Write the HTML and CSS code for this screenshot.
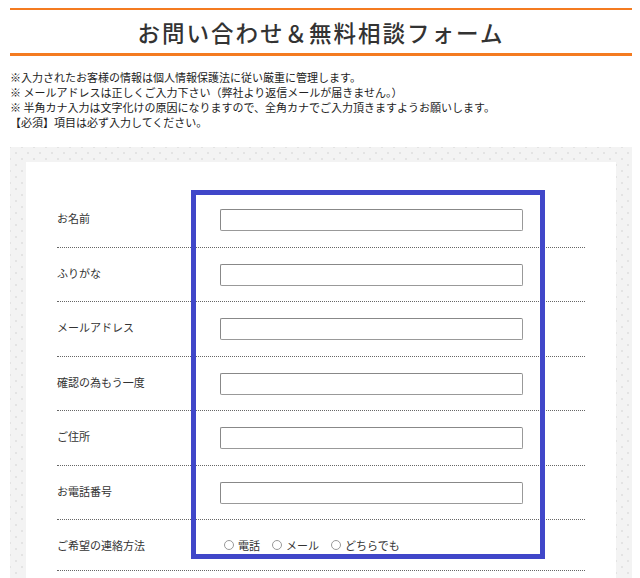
FILE: index.html
```html
<!DOCTYPE html>
<html lang="ja">
<head>
  <meta charset="UTF-8">
  <meta name="viewport" content="width=device-width, initial-scale=1">
  <title>お問い合わせ＆無料相談フォーム</title>
  <link rel="stylesheet" href="styles.css">
</head>
<body>
<div class="page">
  <h1 class="form-title">お問い合わせ＆無料相談フォーム</h1>
  <div class="notes">
    <p>※入力されたお客様の情報は個人情報保護法に従い厳重に管理します。</p>
    <p>※ メールアドレスは正しくご入力下さい（弊社より返信メールが届きません。）</p>
    <p>※ 半角カナ入力は文字化けの原因になりますので、全角カナでご入力頂きますようお願いします。</p>
    <p>【必須】項目は必ず入力してください。</p>
  </div>
  <div class="form-bg">
    <div class="form-box">
      <div class="form-rows">
        <div class="row">
          <label class="row-label">お名前</label>
          <div class="row-field"><input type="text" class="text-input"></div>
        </div>
        <div class="row">
          <label class="row-label">ふりがな</label>
          <div class="row-field"><input type="text" class="text-input"></div>
        </div>
        <div class="row">
          <label class="row-label">メールアドレス</label>
          <div class="row-field"><input type="text" class="text-input"></div>
        </div>
        <div class="row">
          <label class="row-label">確認の為もう一度</label>
          <div class="row-field"><input type="text" class="text-input"></div>
        </div>
        <div class="row">
          <label class="row-label">ご住所</label>
          <div class="row-field"><input type="text" class="text-input"></div>
        </div>
        <div class="row">
          <label class="row-label">お電話番号</label>
          <div class="row-field"><input type="text" class="text-input"></div>
        </div>
        <div class="row row-radio">
          <label class="row-label">ご希望の連絡方法</label>
          <div class="row-field radios">
            <label class="radio"><input type="radio" name="contact">電話</label>
            <label class="radio"><input type="radio" name="contact">メール</label>
            <label class="radio"><input type="radio" name="contact">どちらでも</label>
          </div>
        </div>
      </div>
      <div class="highlight"></div>
    </div>
  </div>
</div>
</body>
</html>
```

FILE: styles.css
```css
body {
  margin: 0;
  font-family: "Noto Sans CJK JP", "Noto Sans", sans-serif;
  color: #333;
  background-color: #fff;
}
.page {
  width: 622px;
  margin-left: 10px;
  padding-top: 8px;
}
.form-title {
  margin: 0;
  padding-top: 2px;
  height: 41px;
  line-height: 41px;
  border-top: 2px solid #f47b20;
  border-bottom: 3px solid #f47b20;
  text-align: center;
  font-size: 22.5px;
  font-weight: 500;
  letter-spacing: 2px;
  color: #333;
}
.notes {
  margin-top: 14px;
  font-size: 11px;
  line-height: 15px;
  color: #222;
}
.notes p {
  margin: 0;
}
.form-bg {
  margin-top: 17px;
  padding: 15px 16px 0;
  background-color: #f3f3f3;
  background-image:
    radial-gradient(circle, #e3e3e3 1px, transparent 1.5px),
    radial-gradient(circle, #e3e3e3 1px, transparent 1.5px);
  background-size: 12px 12px;
  background-position: 0 0, 6px 6px;
}
.form-box {
  position: relative;
  background-color: #fff;
  padding: 31px 31px 40px;
}
.row {
  display: flex;
  align-items: center;
  padding: 16px 0 15.5px;
  border-bottom: 1px dotted #666;
}
.row-label {
  width: 163px;
  padding-bottom: 4px;
  font-size: 11px;
  color: #333;
}
.row-radio .row-label {
  padding-bottom: 0;
}
.text-input {
  display: block;
  box-sizing: border-box;
  width: 303px;
  height: 22px;
  margin: 0;
  border: 1px solid #999;
  border-top-color: #888;
  border-left-color: #888;
  border-radius: 2px;
  background: #fff;
}
.row-radio .row-field {
  height: 18px;
}
.radios {
  display: flex;
  align-items: center;
  padding-left: 4px;
  font-size: 11px;
  color: #333;
}
.radio {
  display: flex;
  align-items: center;
  margin-right: 12px;
}
.radio input {
  appearance: none;
  width: 10px;
  height: 10px;
  margin: 0 4px 0 0;
  border: 1px solid #999;
  border-radius: 50%;
  background: #fff;
}
.highlight {
  position: absolute;
  left: 165px;
  top: 28px;
  width: 344px;
  height: 359px;
  border: 5px solid #4047c9;
}
```
